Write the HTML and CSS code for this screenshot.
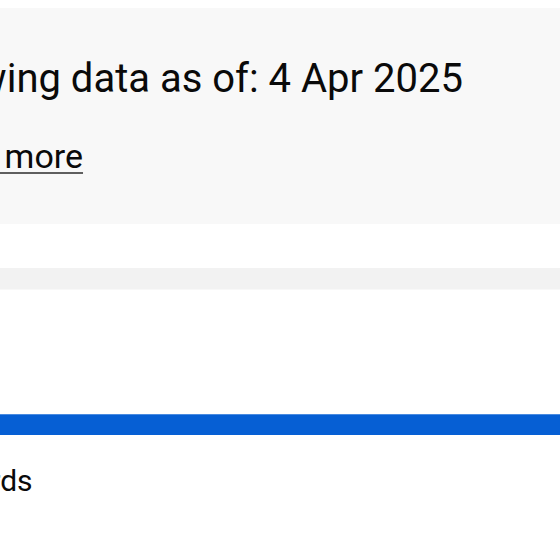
FILE: index.html
```html
<!DOCTYPE html>
<html lang="en">
<head>
<meta charset="utf-8">
<title>Data notice</title>
<link rel="stylesheet" href="styles.css">
</head>
<body>
<div class="page">
  <section class="notice">
    <p class="notice-title">Showing data as of: 4 Apr 2025</p>
    <a class="notice-link" href="#">Learn more</a>
  </section>
  <div class="spacer-bar"></div>
  <div class="tabs">
    <div class="tab-indicator"></div>
  </div>
  <h2 class="section-title">Rewards</h2>
</div>
</body>
</html>
```
FILE: styles.css
```css
html, body {
  margin: 0;
  padding: 0;
  background: #ffffff;
}
body {
  font-family: Roboto, "Noto Sans", "Liberation Sans", sans-serif;
  color: #0a0a0a;
  overflow: hidden;
  width: 560px;
  height: 560px;
}
.page {
  margin-left: -92px;
  width: 720px;
  padding-top: 8px;
}
.notice {
  background: #f8f8f8;
  height: 216px;
  box-sizing: border-box;
  padding-top: 47px;
}
.notice-title {
  margin: 0;
  font-size: 40px;
  line-height: 48px;
  font-weight: 400;
  white-space: nowrap;
}
.notice-link {
  display: inline-block;
  margin-top: 33px;
  margin-left: 3px;
  font-size: 34px;
  line-height: 40px;
  color: #0a0a0a;
  text-decoration: underline;
  text-decoration-color: #5f5f5f;
  text-decoration-thickness: 2px;
  text-underline-offset: 4px;
}
.spacer-bar {
  margin-top: 44px;
  height: 21px;
  background: #f2f2f2;
  border-bottom: 1px solid #f8f8f8;
}
.tabs {
  height: 145px;
  display: flex;
  align-items: flex-end;
}
.tab-indicator {
  flex: 1;
  height: 20px;
  background: #065fd4;
  border-top: 1px solid #4a8be0;
}
.section-title {
  margin: 28px 0 0;
  padding-left: 9px;
  font-size: 30px;
  line-height: 36px;
  font-weight: 400;
}
```
